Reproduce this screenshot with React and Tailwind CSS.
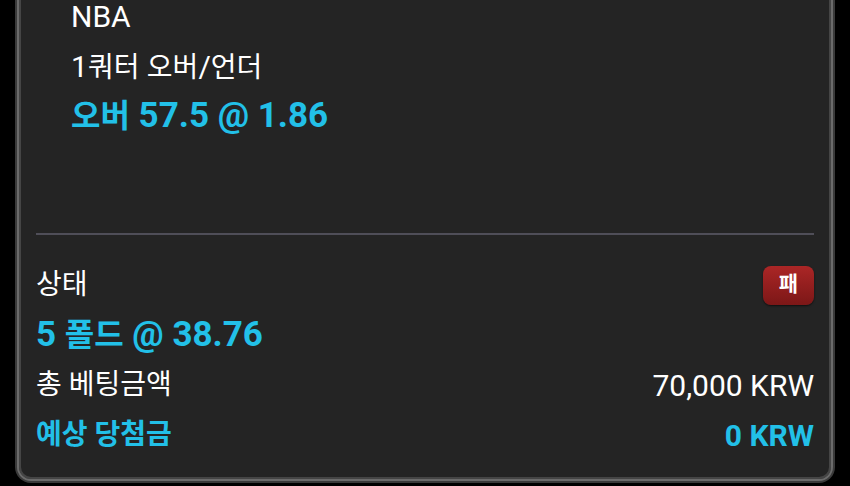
import React from 'react';

// 베팅 내역 카드 - 하단 정산 영역
const FONT = "font-['Roboto','Noto_Sans_CJK_KR',sans-serif]";

// 한글과 숫자/영문의 크기를 따로 맞춘다
function Mixed({ text, latin }) {
  return text.split(/([\uac00-\ud7a3]+)/).map((part, i) =>
    /[\uac00-\ud7a3]/.test(part) || part === '' ? (
      <React.Fragment key={i}>{part}</React.Fragment>
    ) : (
      <span key={i} className={latin}>
        {part}
      </span>
    )
  );
}

function Row({ children, className = '' }) {
  return (
    <div className={`flex h-[50px] items-center justify-between whitespace-pre ${className}`}>
      {children}
    </div>
  );
}

const regular = 'text-[28px] text-white';
const regularLatin = 'text-[30px]';
const accent = 'text-[32px] font-bold text-[#22c0e8]';
const accentLatin = 'text-[35px]';

export default function App() {
  return (
    <div className={`flex h-[486px] w-full flex-col justify-end overflow-hidden bg-black pb-[3px] ${FONT}`}>
      {/* 카드 테두리 */}
      <div className="mx-[15px] rounded-b-[16px] bg-[#3a3a3a] px-[2px] pb-[2px]">
        <div className="rounded-b-[14px] border-x-2 border-b-2 border-[#6b6b6b]">
          <div className="rounded-b-[12px] border-x-2 border-b-2 border-[#454545] bg-[#242424] px-[15px] pb-[17px]">
            {/* 선택 정보 */}
            <div className="pb-[92px] pl-[35px] pt-[40px]">
              <Row className={regular}>
                <span><Mixed text="NBA" latin={regularLatin} /></span>
              </Row>
              <Row className={regular}>
                <span><Mixed text="1쿼터 오버/언더" latin={regularLatin} /></span>
              </Row>
              <Row className={accent}>
                <span><Mixed text="오버 57.5 @ 1.86" latin={accentLatin} /></span>
              </Row>
            </div>

            <div className="h-[2px] bg-[#4f4e58]" />

            {/* 결과 */}
            <div className="pt-[25px]">
              <Row className={regular}>
                <span>상태</span>
                <span className="flex h-[39px] w-[51px] items-center justify-center rounded-[8px] bg-gradient-to-b from-[#ab2626] to-[#7c1717] text-[21px] font-bold text-white shadow-[0_1px_2px_rgba(0,0,0,0.6)]">
                  패
                </span>
              </Row>
              <Row className={accent}>
                <span><Mixed text="5 폴드 @ 38.76" latin={accentLatin} /></span>
              </Row>
              <Row className={regular}>
                <span>총 베팅금액</span>
                <span className={regularLatin}>70,000 KRW</span>
              </Row>
              <Row className="text-[28px] font-bold text-[#22c0e8]">
                <span>예상 당첨금</span>
                <span className="text-[30px]">0 KRW</span>
              </Row>
            </div>
          </div>
        </div>
      </div>
    </div>
  );
}
